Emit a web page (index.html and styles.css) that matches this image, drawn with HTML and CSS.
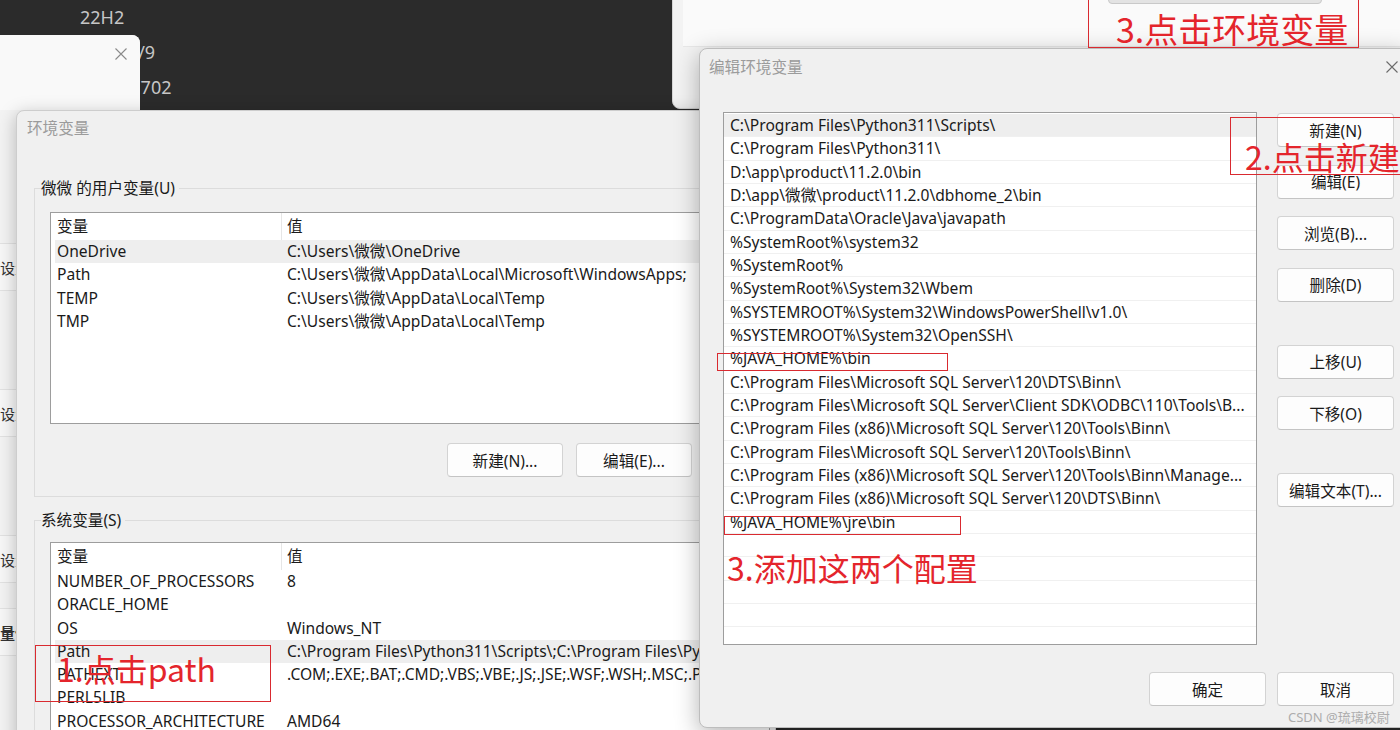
FILE: index.html
```html
<!DOCTYPE html>
<html lang="zh-CN">
<head>
    <meta charset="UTF-8">
    <meta name="viewport" content="width=device-width, initial-scale=1.0">
    <title>编辑环境变量</title>
    <link rel="stylesheet" href="styles.css">
</head>
<body>
<div class="desktop">

    <!-- 背后的系统信息 -->
    <div class="about-info">
        <div>22H2</div>
        <div>2023/5/9</div>
        <div class="build">22621.1702</div>
    </div>

    <div class="settings-win">
        <div class="settings-head">
            <svg class="close-x" width="12" height="12" viewBox="0 0 12 12"><path d="M0.5 0.5 L11.5 11.5 M11.5 0.5 L0.5 11.5" stroke="#8a8a8a" stroke-width="1.1" fill="none"/></svg>
        </div>
        <div class="settings-item first">设置</div>
        <div class="settings-item">设置</div>
        <div class="settings-item">设置</div>
        <div class="settings-item near strong">量值</div>
    </div>

    <div class="sysprop-win">
        <div class="sysprop-card">
            <div class="sysprop-btn"></div>
        </div>
    </div>

    <!-- 环境变量 -->
    <div class="env-win">
        <div class="titlebar"><span class="title">环境变量</span></div>
        <div class="env-body">
            <fieldset class="group">
                <legend>微微 的用户变量(U)</legend>
                <div class="var-list user-list">
                    <div class="var-row var-head"><span class="col-name">变量</span><span class="col-val">值</span></div>
                    <div class="var-row selected"><span class="col-name">OneDrive</span><span class="col-val">C:\Users\微微\OneDrive</span></div>
                    <div class="var-row"><span class="col-name">Path</span><span class="col-val">C:\Users\微微\AppData\Local\Microsoft\WindowsApps;</span></div>
                    <div class="var-row"><span class="col-name">TEMP</span><span class="col-val">C:\Users\微微\AppData\Local\Temp</span></div>
                    <div class="var-row"><span class="col-name">TMP</span><span class="col-val">C:\Users\微微\AppData\Local\Temp</span></div>
                </div>
                <div class="btn-row">
                    <button class="btn">新建(N)...</button>
                    <button class="btn">编辑(E)...</button>
                </div>
            </fieldset>

            <fieldset class="group sys-group">
                <legend>系统变量(S)</legend>
                <div class="var-list sys-list">
                    <div class="var-row var-head"><span class="col-name">变量</span><span class="col-val">值</span></div>
                    <div class="var-row"><span class="col-name">NUMBER_OF_PROCESSORS</span><span class="col-val">8</span></div>
                    <div class="var-row"><span class="col-name">ORACLE_HOME</span><span class="col-val"></span></div>
                    <div class="var-row"><span class="col-name">OS</span><span class="col-val">Windows_NT</span></div>
                    <div class="var-row selected"><span class="col-name">Path</span><span class="col-val">C:\Program Files\Python311\Scripts\;C:\Program Files\Python311\;D:\app\product</span></div>
                    <div class="var-row"><span class="col-name">PATHEXT</span><span class="col-val">.COM;.EXE;.BAT;.CMD;.VBS;.VBE;.JS;.JSE;.WSF;.WSH;.MSC;.PY;.PYW</span></div>
                    <div class="var-row"><span class="col-name">PERL5LIB</span><span class="col-val"></span></div>
                    <div class="var-row"><span class="col-name">PROCESSOR_ARCHITECTURE</span><span class="col-val">AMD64</span></div>
                </div>
            </fieldset>
        </div>
    </div>

    <!-- 编辑环境变量 -->
    <div class="edit-win">
        <div class="titlebar">
            <span class="title">编辑环境变量</span>
            <svg class="close-x" width="12" height="12" viewBox="0 0 12 12"><path d="M0.5 0.5 L11.5 11.5 M11.5 0.5 L0.5 11.5" stroke="#6a6a6a" stroke-width="1.1" fill="none"/></svg>
        </div>
        <div class="edit-body">
            <div class="edit-main">
                <div class="path-list">
                    <div class="path-row selected">C:\Program Files\Python311\Scripts\</div>
                    <div class="path-row">C:\Program Files\Python311\</div>
                    <div class="path-row">D:\app\product\11.2.0\bin</div>
                    <div class="path-row">D:\app\微微\product\11.2.0\dbhome_2\bin</div>
                    <div class="path-row">C:\ProgramData\Oracle\Java\javapath</div>
                    <div class="path-row">%SystemRoot%\system32</div>
                    <div class="path-row">%SystemRoot%</div>
                    <div class="path-row">%SystemRoot%\System32\Wbem</div>
                    <div class="path-row">%SYSTEMROOT%\System32\WindowsPowerShell\v1.0\</div>
                    <div class="path-row">%SYSTEMROOT%\System32\OpenSSH\</div>
                    <div class="path-row">%JAVA_HOME%\bin</div>
                    <div class="path-row">C:\Program Files\Microsoft SQL Server\120\DTS\Binn\</div>
                    <div class="path-row">C:\Program Files\Microsoft SQL Server\Client SDK\ODBC\110\Tools\B...</div>
                    <div class="path-row">C:\Program Files (x86)\Microsoft SQL Server\120\Tools\Binn\</div>
                    <div class="path-row">C:\Program Files\Microsoft SQL Server\120\Tools\Binn\</div>
                    <div class="path-row">C:\Program Files (x86)\Microsoft SQL Server\120\Tools\Binn\Manage...</div>
                    <div class="path-row">C:\Program Files (x86)\Microsoft SQL Server\120\DTS\Binn\</div>
                    <div class="path-row">%JAVA_HOME%\jre\bin</div>
                    <div class="path-row"></div>
                    <div class="path-row"></div>
                    <div class="path-row"></div>
                    <div class="path-row"></div>
                    <div class="path-row"></div>
                </div>
                <div class="btn-col">
                    <button class="btn">新建(N)</button>
                    <button class="btn">编辑(E)</button>
                    <button class="btn">浏览(B)...</button>
                    <button class="btn">删除(D)</button>
                    <button class="btn spaced">上移(U)</button>
                    <button class="btn">下移(O)</button>
                    <button class="btn spaced">编辑文本(T)...</button>
                </div>
            </div>
            <div class="footer">
                <button class="btn">确定</button>
                <button class="btn">取消</button>
            </div>
        </div>
    </div>

    <div class="watermark">CSDN @琉璃校尉</div>

    <!-- 红色标注 -->
    <div class="mark mark-env">3.点击环境变量</div>
    <div class="mark mark-new">2.点击新建</div>
    <div class="mark mark-java1"></div>
    <div class="mark mark-java2"></div>
    <div class="note">3.添加这两个配置</div>
    <div class="mark mark-path">1.点击path</div>

</div>
</body>
</html>
```

FILE: styles.css
```css
* {
    box-sizing: border-box;
}

body {
    margin: 0;
    background: #2b2b2b;
    font-family: "Noto Sans", "Noto Sans CJK SC", sans-serif;
    font-size: 15.6px;
    color: #1a1a1a;
}

.desktop {
    position: relative;
    width: 1400px;
    height: 730px;
    overflow: hidden;
}

/* 背景窗口 */
.about-info {
    position: absolute;
    left: 80px;
    top: 0;
    color: #c6c6c6;
    font-size: 18px;
    line-height: 35px;
}

.about-info .build {
    margin-left: -6px;
}

.settings-win {
    position: absolute;
    left: 0;
    top: 35px;
    width: 140px;
    height: 700px;
    background: #f3f3f3;
    border-radius: 0 8px 0 0;
    overflow: hidden;
}

.settings-head {
    height: 75px;
    background: #f9f9f9;
    display: flex;
    justify-content: flex-end;
    padding: 13px 13px 0 0;
}

.settings-item {
    height: 48px;
    line-height: 48px;
    margin-top: 98px;
    border-top: 1px solid #e2e2e2;
    border-bottom: 1px solid #e2e2e2;
    background: #f7f7f7;
    color: #333;
    font-size: 15px;
    white-space: nowrap;
}

.settings-item.first {
    margin-top: 133px;
}

.settings-item.near {
    margin-top: 25px;
}

.settings-item.strong {
    font-weight: bold;
}

.sysprop-win {
    position: absolute;
    left: 672px;
    top: -12px;
    width: 760px;
    height: 121px;
    background: #f3f3f3;
    border: 1px solid #d6d6d6;
    border-radius: 8px;
    padding: 0 0 0 10px;
}

.sysprop-card {
    height: 58px;
    background: #fafafa;
    border-bottom: 1px solid #e8e8e8;
    padding-left: 425px;
}

.sysprop-btn {
    width: 214px;
    height: 15px;
    background: #e3e3e3;
    border: 1px solid #c9c9c9;
    border-radius: 0 0 4px 4px;
}

/* 窗口通用 */
.titlebar {
    display: flex;
    align-items: center;
    justify-content: space-between;
}

.title {
    color: #9b9b9b;
    font-size: 15.6px;
}

.btn {
    font-family: "Noto Sans", "Noto Sans CJK SC", sans-serif;
    font-size: 15.6px;
    color: #1a1a1a;
    background: #fdfdfd;
    border: 1px solid #d3d3d3;
    border-bottom-color: #c4c4c4;
    border-radius: 4px;
    height: 34px;
    padding: 0;
    white-space: nowrap;
}

/* 环境变量 */
.env-win {
    position: absolute;
    left: 16px;
    top: 110px;
    width: 760px;
    height: 650px;
    background: #f0f0f0;
    border: 1px solid #cdcdcd;
    border-radius: 8px 8px 0 0;
    box-shadow: 0 4px 18px rgba(0, 0, 0, 0.25);
}

.env-win .titlebar {
    height: 36px;
    padding: 0 0 3px 10px;
}

.env-body {
    padding: 31px 0 0 17px;
}

.group {
    margin: 0;
    padding: 0 0 19px 6px;
    border: 1px solid #dcdcdc;
    border-right: none;
    width: 760px;
}

.group legend {
    padding: 0 4px 0 0;
    line-height: 20px;
    font-size: 15.6px;
    color: #1a1a1a;
}

.sys-group {
    margin-top: 13px;
}

.var-list {
    margin-left: 9px;
    width: 720px;
    background: #fff;
    border: 1px solid #9d9d9d;
    overflow: hidden;
}

.user-list {
    margin-top: 14px;
    height: 212px;
}

.sys-list {
    margin-top: 12px;
    height: 260px;
}

.var-row {
    display: flex;
    height: 23.3px;
    line-height: 23.3px;
    margin: 0 4px;
    white-space: nowrap;
}

.var-row.var-head {
    height: 27px;
    line-height: 27px;
}

.var-row.selected {
    background: #eeeeee;
}

.col-name {
    flex: none;
    width: 227px;
    padding-left: 2px;
}

.var-head .col-name {
    border-right: 1px solid #e6e6e6;
}

.col-val {
    padding-left: 5px;
}

.btn-row {
    display: flex;
    justify-content: flex-end;
    gap: 13px;
    width: 651px;
    margin-top: 19px;
}

.btn-row .btn {
    width: 116px;
}

/* 编辑环境变量 */
.edit-win {
    position: absolute;
    left: 699px;
    top: 48px;
    width: 710px;
    height: 680px;
    background: #f0f0f0;
    border: 1px solid #bdbdbd;
    border-radius: 8px;
    box-shadow: 0 6px 24px rgba(0, 0, 0, 0.3);
}

.edit-win .titlebar {
    height: 38px;
    padding: 0 10px 3px 9px;
}

.edit-body {
    padding: 25px 0 0 23px;
}

.edit-main {
    display: flex;
    align-items: flex-start;
    gap: 20px;
}

.path-list {
    width: 534px;
    height: 533px;
    background: #fff;
    border: 1px solid #9d9d9d;
    padding-top: 1px;
    overflow: hidden;
}

.path-row {
    height: 23.33px;
    line-height: 22.33px;
    padding-left: 6px;
    border-bottom: 1px solid #f0f0f0;
    white-space: nowrap;
    overflow: hidden;
}

.path-row.selected {
    background: #eeeeee;
}

.btn-col {
    display: flex;
    flex-direction: column;
    gap: 17.5px;
    padding-top: 1px;
}

.btn-col .btn {
    width: 117px;
}

.btn-col .spaced {
    margin-top: 25.5px;
}

.footer {
    display: flex;
    justify-content: flex-end;
    gap: 11px;
    width: 671px;
    margin-top: 27px;
}

.footer .btn {
    width: 117px;
}

.watermark {
    position: absolute;
    left: 1288px;
    top: 707px;
    font-size: 13px;
    color: #acacac;
    white-space: nowrap;
}

/* 红色标注 */
.mark,
.note {
    position: absolute;
    color: #e4252c;
    font-family: "Noto Sans CJK SC", sans-serif;
    white-space: nowrap;
}

.mark {
    border: 1.5px solid #d92a30;
}

.mark-env {
    left: 1088px;
    top: -2px;
    width: 271px;
    height: 50px;
    padding: 13px 0 0 27px;
    font-size: 34px;
    line-height: 34px;
}

.mark-new {
    left: 1230px;
    top: 117px;
    width: 190px;
    height: 58px;
    padding: 22px 0 0 14px;
    font-size: 32px;
    line-height: 32px;
}

.mark-java1 {
    left: 717px;
    top: 353px;
    width: 231px;
    height: 18px;
}

.mark-java2 {
    left: 724px;
    top: 516px;
    width: 237px;
    height: 19px;
}

.note {
    left: 727px;
    top: 551px;
    font-size: 32px;
    line-height: 32px;
}

.mark-path {
    left: 35px;
    top: 645px;
    width: 236px;
    height: 57px;
    padding: 6px 0 0 21px;
    font-size: 32px;
    line-height: 32px;
}
```
